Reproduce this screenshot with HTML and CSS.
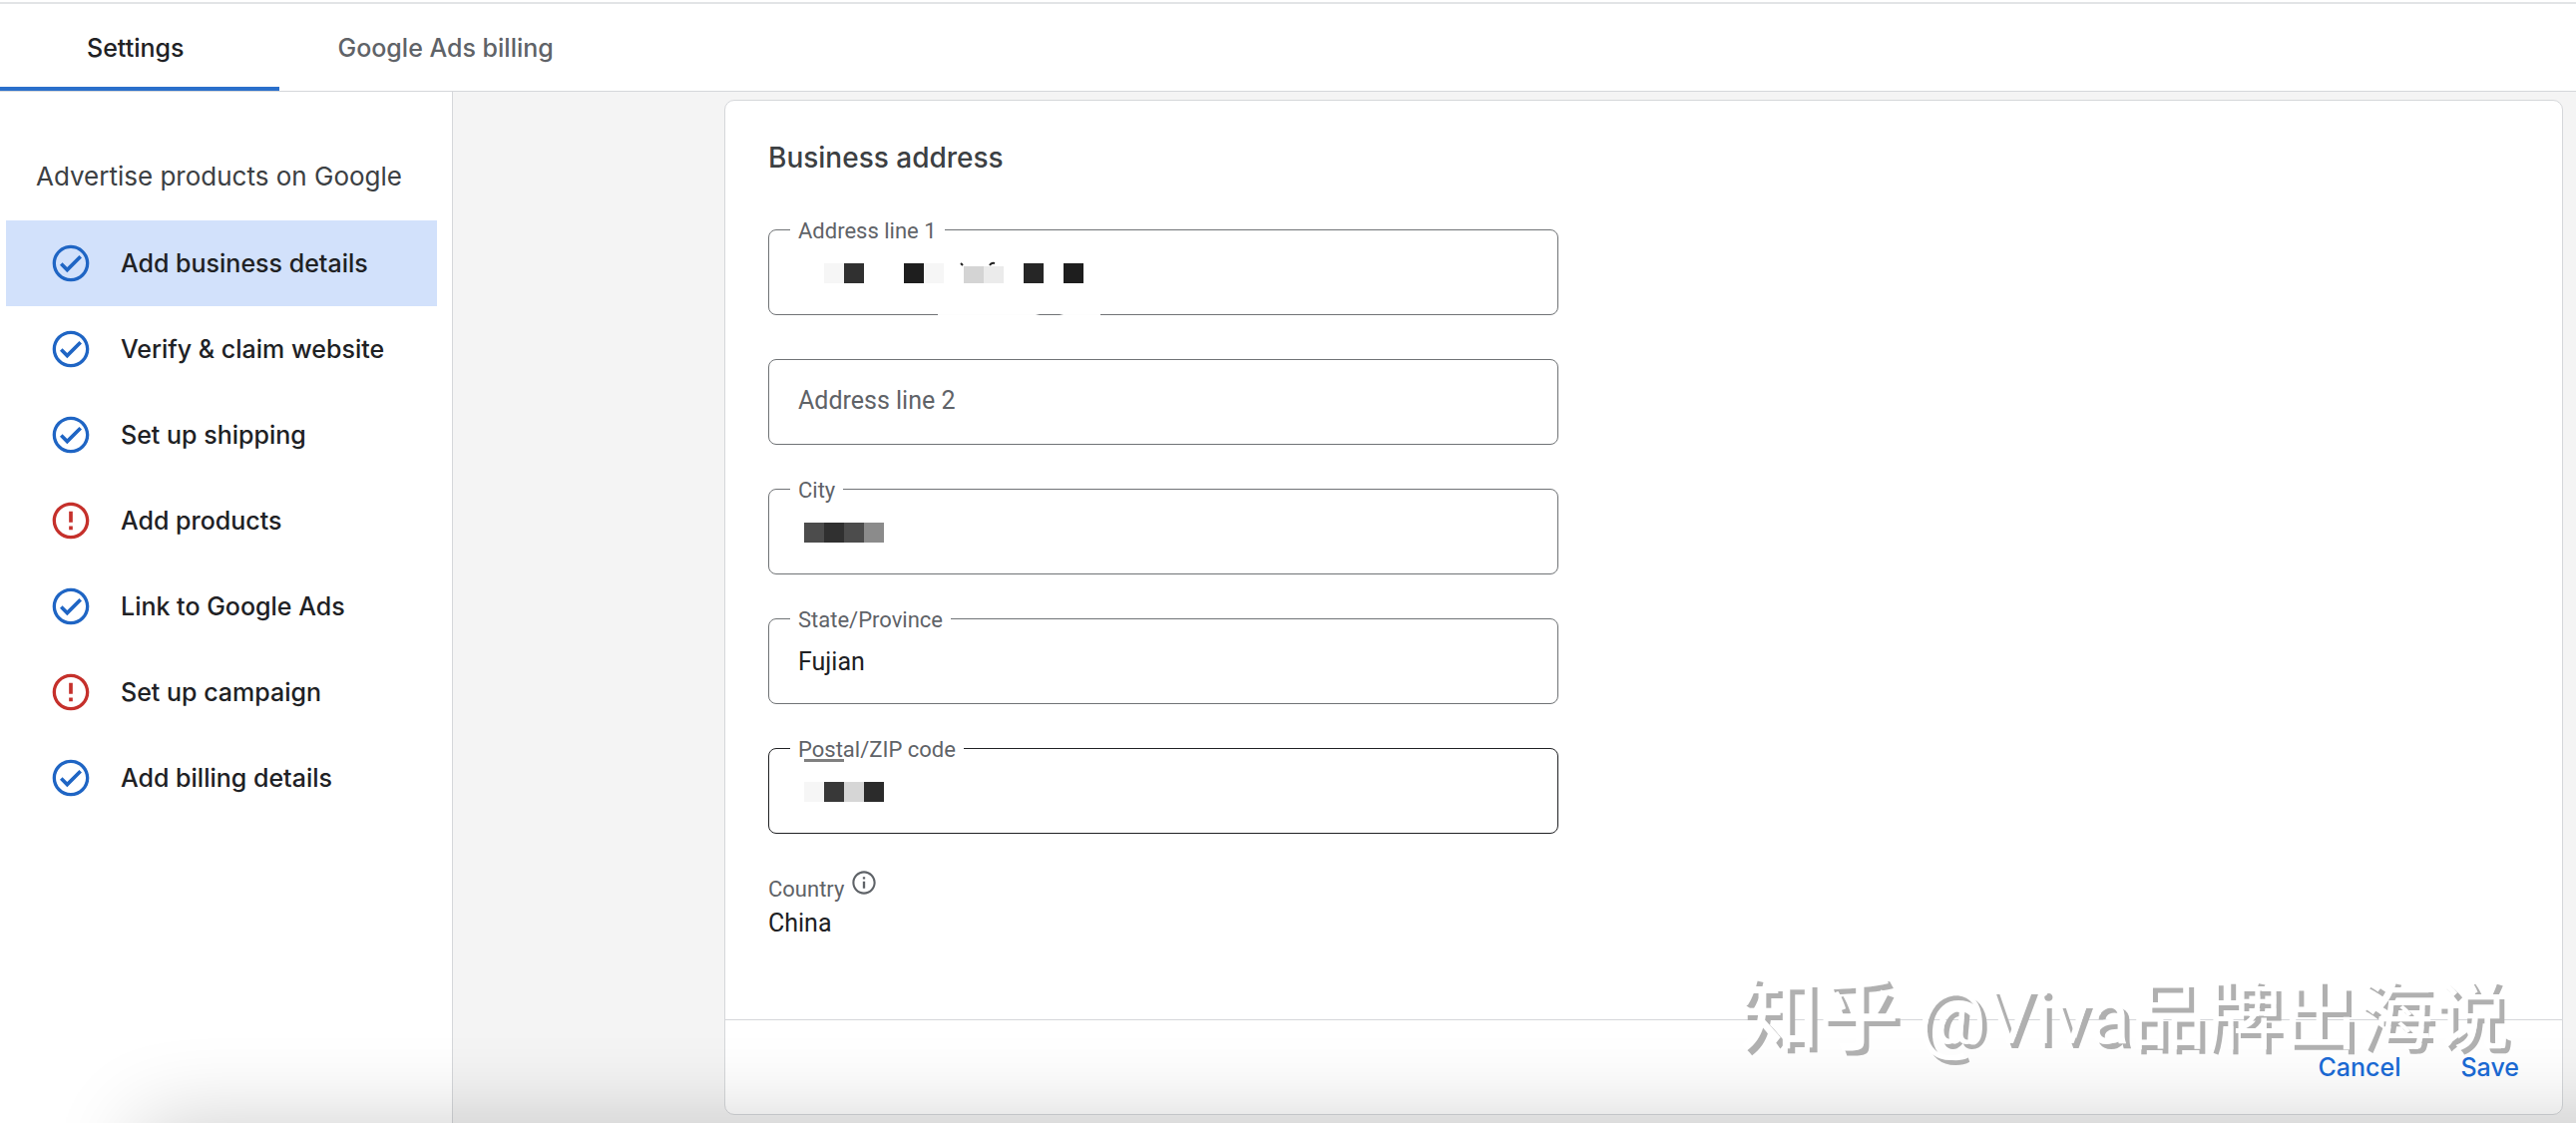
FILE: index.html
```
<!DOCTYPE html>
<html lang="en">
<head>
    <meta charset="UTF-8">
    <meta name="viewport" content="width=device-width, initial-scale=1.0">
    <title>Business address</title>
    <link rel="stylesheet" href="styles.css">
</head>
<body>
    <svg class="defs" aria-hidden="true">
        <symbol id="ok" viewBox="0 0 24 24">
            <path d="M12 2C6.48 2 2 6.48 2 12s4.48 10 10 10 10-4.48 10-10S17.52 2 12 2zm0 18.2c-4.52 0-8.2-3.68-8.2-8.2S7.48 3.8 12 3.8s8.2 3.68 8.2 8.2-3.68 8.2-8.2 8.2zM16.59 7.58L10 14.17l-2.59-2.58L6 13l4 4 8-8z"/>
        </symbol>
        <symbol id="err" viewBox="0 0 24 24">
            <path d="M11 15h2v2h-2zm0-8h2v6h-2zm1-5C6.47 2 2 6.5 2 12s4.47 10 10 10 10-4.48 10-10S17.52 2 12 2zm0 18.2c-4.52 0-8.2-3.68-8.2-8.2S7.48 3.8 12 3.8s8.2 3.68 8.2 8.2-3.68 8.2-8.2 8.2z"/>
        </symbol>
    </svg>
    <nav class="tabs">
        <a class="tab on" href="#settings">Settings</a>
        <a class="tab" href="#billing">Google Ads billing</a>
    </nav>
    <div class="page">
        <aside class="side">
            <h2>Advertise products on Google</h2>
            <ul>
                <li><a class="on" href="#details"><svg class="ok"><use href="#ok"/></svg>Add business details</a></li>
                <li><a href="#website"><svg class="ok"><use href="#ok"/></svg>Verify &amp; claim website</a></li>
                <li><a href="#shipping"><svg class="ok"><use href="#ok"/></svg>Set up shipping</a></li>
                <li><a href="#products"><svg class="err"><use href="#err"/></svg>Add products</a></li>
                <li><a href="#ads"><svg class="ok"><use href="#ok"/></svg>Link to Google Ads</a></li>
                <li><a href="#campaign"><svg class="err"><use href="#err"/></svg>Set up campaign</a></li>
                <li><a href="#pay"><svg class="ok"><use href="#ok"/></svg>Add billing details</a></li>
            </ul>
        </aside>
        <main class="main">
            <form class="card">
                <div class="body">
                    <h1>Business address</h1>
                    <div class="field">
                        <label for="line1">Address line 1</label>
                        <input type="text" id="line1">
                        <svg class="mask" width="300" height="26" aria-hidden="true">
                            <path fill="#f6f6f6" d="M24 4h20v20H24zM124 4h20v20h-20z"/>
                            <path fill="#303030" d="M44 4h20v20H44z"/>
                            <path fill="#1e1e1e" d="M104 4h20v20h-20zM264 4h20v20h-20z"/>
                            <path fill="#d4d4d4" d="M164 7h20v17h-20z"/>
                            <path fill="#ebebeb" d="M184 7h20v17h-20z"/>
                            <path fill="#262626" d="M224 4h20v20h-20z"/>
                            <path fill="none" stroke="#202020" stroke-width="2" d="M161 4l2 2M190 6c1-2 2-3 5-2"/>
                        </svg>
                        <span class="wipe"></span>
                    </div>
                    <div class="field empty">
                        <label for="line2">Address line 2</label>
                        <input type="text" id="line2">
                    </div>
                    <div class="field">
                        <label for="city">City</label>
                        <input type="text" id="city">
                        <svg class="mask" width="100" height="26" aria-hidden="true">
                            <path fill="#4c4c4c" d="M4 4h20v20H4zM44 4h20v20H44z"/>
                            <path fill="#303030" d="M24 4h20v20H24z"/>
                            <path fill="#8b8b8b" d="M64 4h20v20H64z"/>
                        </svg>
                    </div>
                    <div class="field">
                        <label for="state">State/Province</label>
                        <input type="text" id="state" value="Fujian">
                    </div>
                    <div class="field hover">
                        <label for="zip">Postal/ZIP code</label>
                        <input type="text" id="zip">
                        <svg class="mask" width="100" height="50" aria-hidden="true">
                            <path fill="#808080" d="M4 5h40v3H4z"/>
                            <path fill="#f6f6f6" d="M4 28h20v20H4z"/>
                            <path fill="#383838" d="M24 28h20v20H24z"/>
                            <path fill="#d6d6d6" d="M44 28h20v20H44z"/>
                            <path fill="#2b2b2b" d="M64 28h20v20H64z"/>
                        </svg>
                    </div>
                    <div class="country">
                        <p class="name">Country
                            <svg viewBox="0 0 24 24"><path d="M11 7h2v2h-2zm0 4h2v6h-2zm1-9C6.48 2 2 6.48 2 12s4.48 10 10 10 10-4.48 10-10S17.52 2 12 2zm0 18.2c-4.52 0-8.2-3.68-8.2-8.2S7.48 3.8 12 3.8s8.2 3.68 8.2 8.2-3.68 8.2-8.2 8.2z"/></svg>
                        </p>
                        <p>China</p>
                    </div>
                </div>
                <div class="foot">
                    <button type="button">Cancel</button>
                    <button type="button">Save</button>
                </div>
            </form>
        </main>
    </div>
    <div class="shade"></div>
    <p class="mark"><b>知乎</b> @Viva品牌出海说</p>
</body>
</html>
```

FILE: styles.css
```
*{
    margin:0;
    padding:0;
    box-sizing:border-box;
}
body{
    min-height:100vh;
    display:flex;
    flex-direction:column;
    background:#fff;
    color:#202124;
    font-family:Roboto,"Noto Sans CJK SC",sans-serif;
    font-size:25px;
    line-height:32px;
}
a{
    color:inherit;
    text-decoration:none;
}
ul{
    list-style:none;
}
.defs{
    display:none;
}
.tabs,.side,h1,button{
    font-family:Inter,"Open Sans",sans-serif;
    font-weight:500;
    font-size:25px;
}
.tabs{
    height:90px;
    margin-top:2px;
    display:flex;
    border-top:2px solid #e2e4e6;
    border-bottom:1px solid #d5d7da;
}
.tab{
    padding:28px 58px 0;
    color:#5f6368;
}
.tab.on{
    padding:28px 96px 0 87px;
    color:#202124;
    border-bottom:4px solid #2a6fcb;
}
.page{
    flex:1;
    display:flex;
}
.side{
    width:454px;
    padding:69px 15px 0 6px;
    border-right:1px solid #d5d7da;
}
.side h2{
    padding-left:30px;
    margin-bottom:28px;
    font-size:26px;
    font-weight:400;
    color:#3c4043;
    white-space:nowrap;
}
.side li a{
    height:86px;
    padding-left:43px;
    display:flex;
    align-items:center;
}
.side li a.on{
    background:#d2e1fb;
}
.side svg{
    width:44px;
    height:44px;
    margin-right:28px;
}
.ok{
    fill:#1f65c4;
}
.err{
    fill:#c5302b;
}
.main{
    flex:1;
    padding:8px 13px 8px 272px;
    background:#f4f4f4;
}
.card{
    height:100%;
    display:flex;
    flex-direction:column;
    background:#fff;
    border:1px solid #d5d7da;
    border-radius:10px;
}
.body{
    flex:1;
    padding:41px 43px 20px;
}
h1{
    margin-bottom:56px;
    font-size:28px;
    color:#3c4043;
}
.field{
    position:relative;
    max-width:792px;
    height:86px;
    margin-bottom:44px;
}
.field input{
    width:100%;
    height:100%;
    padding:0 29px;
    border:1px solid #707376;
    border-radius:8px;
    background:#fff;
    color:#202124;
    font:inherit;
}
.field label{
    position:absolute;
    top:-12px;
    left:22px;
    padding:0 8px;
    background:#fff;
    color:#5f6368;
    font-size:22px;
    line-height:28px;
}
.field.empty label{
    top:28px;
    font-size:25px;
    background:none;
}
.field.hover input{
    border-color:#202124;
}
.mask{
    position:absolute;
    left:32px;
    top:30px;
}
.field.hover .mask{
    top:6px;
}
.wipe{
    position:absolute;
    left:170px;
    bottom:0;
    width:163px;
    height:1px;
    background:linear-gradient(to right,#fdfdfd 98px,#707376 102px,#707376 122px,#fdfdfd 126px);
}
.country{
    margin-top:-6px;
}
.country .name{
    height:36px;
    display:flex;
    align-items:center;
    color:#5f6368;
    font-size:22px;
}
.country svg{
    width:28px;
    height:28px;
    margin:0 6px 14px;
    fill:#5f6368;
}
.foot{
    height:95px;
    padding:31px 43px 0;
    display:flex;
    justify-content:flex-end;
    align-items:flex-start;
    gap:60px;
    border-top:1px solid #d5d7da;
}
button{
    border:0;
    background:none;
    color:#1b6bd6;
    line-height:32px;
}
.shade{
    position:fixed;
    left:140px;
    right:-200px;
    top:100%;
    height:200px;
    box-shadow:0 0 88px rgba(0,0,0,0.2);
}
.mark{
    position:fixed;
    right:67px;
    bottom:66px;
    color:#fff;
    font-size:76px;
    line-height:80px;
    text-shadow:5px 5px #b0b0b0;
    pointer-events:none;
}
.mark b{
    font-size:80px;
    font-weight:500;
}
```
